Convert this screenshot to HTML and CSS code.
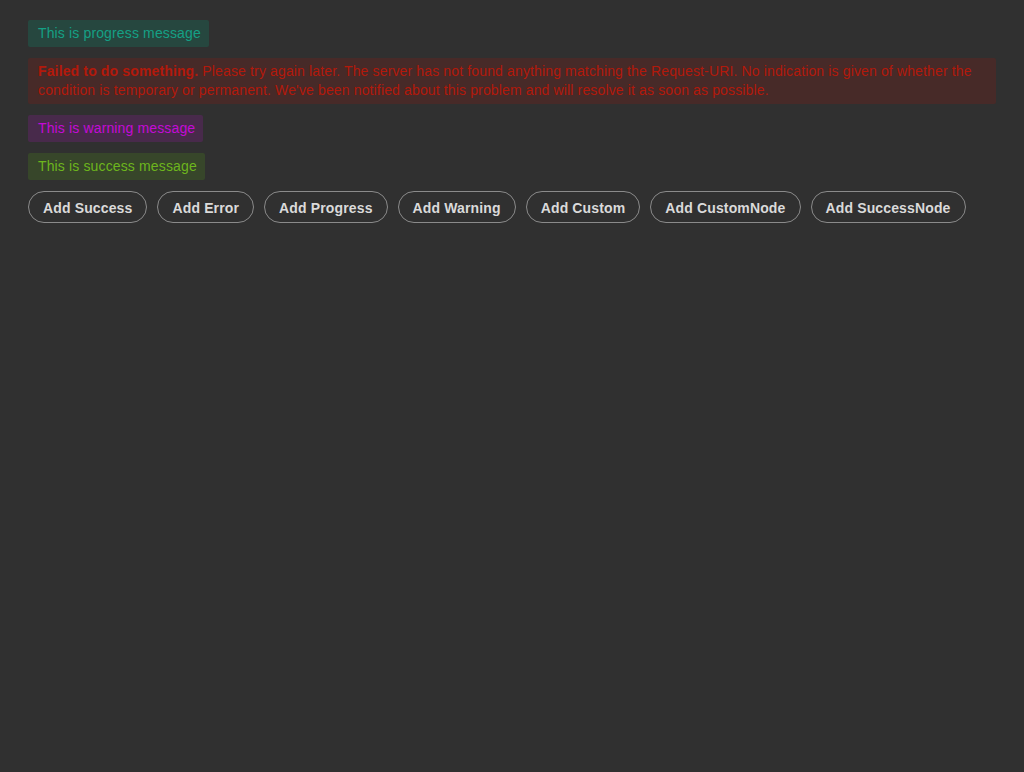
FILE: index.html
```html
<!DOCTYPE html>
<html>
<head>
<meta charset="utf-8">
<link rel="stylesheet" href="styles.css">
</head>
<body>
<div class="page">
  <div class="messages">
    <div class="msg msg-progress">This is progress message</div>
    <div class="msg msg-error"><strong>Failed to do something.</strong> Please try again later. The server has not found anything matching the Request-URI. No indication is given of whether the condition is temporary or permanent. We've been notified about this problem and will resolve it as soon as possible.</div>
    <div class="msg msg-warning">This is warning message</div>
    <div class="msg msg-success">This is success message</div>
  </div>
  <div class="actions">
    <button class="btn">Add Success</button>
    <button class="btn">Add Error</button>
    <button class="btn">Add Progress</button>
    <button class="btn">Add Warning</button>
    <button class="btn">Add Custom</button>
    <button class="btn">Add CustomNode</button>
    <button class="btn">Add SuccessNode</button>
  </div>
</div>
</body>
</html>
```

FILE: styles.css
```css
html, body {
  margin: 0;
  padding: 0;
  background: #303030;
  height: 100%;
}
body {
  font-family: "Liberation Sans", Arial, sans-serif;
  font-size: 14px;
  letter-spacing: 0.14px;
}
.page {
  padding: 20px 28px;
  display: flex;
  flex-direction: column;
  gap: 11px;
  align-items: flex-start;
}
.messages {
  display: flex;
  flex-direction: column;
  gap: 11px;
  align-items: flex-start;
  align-self: stretch;
}
.msg {
  padding: 4px 8px 4px 10px;
  line-height: 19px;
  border-radius: 2px;
}
.msg-progress { background: #26473f; color: #15a085; }
.msg-error { background: #472a28; color: #b3190b; align-self: stretch; padding-right: 14px; }
.msg-error strong { font-weight: bold; }
.msg-warning { background: #482a4b; color: #c40ad6; }
.msg-success { background: #37462a; color: #6db51d; }
.actions {
  display: flex;
  gap: 10px;
}
.btn {
  height: 32px;
  padding: 1px 14px 0;
  border: 1px solid #8a8a8a;
  border-radius: 16px;
  background: transparent;
  color: #dadada;
  font-family: "Liberation Sans", Arial, sans-serif;
  font-size: 14px;
  font-weight: bold;
  letter-spacing: 0.14px;
  cursor: pointer;
}
```
